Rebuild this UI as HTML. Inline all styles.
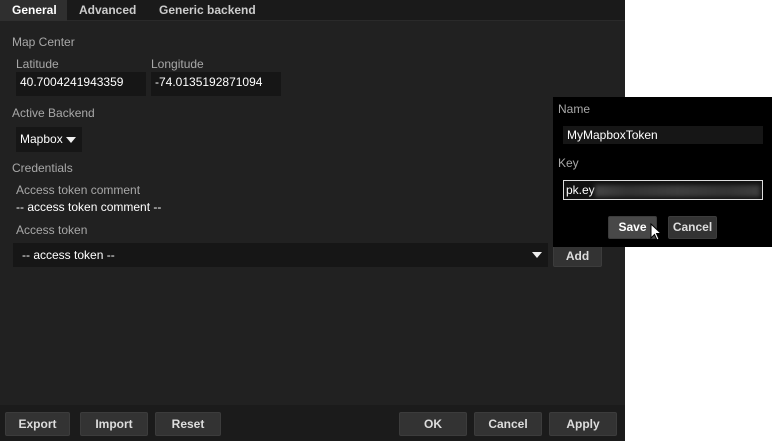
<!DOCTYPE html>
<html><head><style>
*{margin:0;padding:0;box-sizing:border-box}
body{width:772px;height:441px;background:#fff;position:relative;overflow:hidden;font-family:"Liberation Sans",sans-serif;font-size:12px}
.p{position:absolute;left:0;top:0;width:625px;height:441px;background:#212121}
.a{position:absolute;white-space:nowrap}
.l{color:#a8a8a8}
.w{color:#fff}
.in{position:absolute;background:#161616;color:#fff;padding-left:4px;line-height:20px}
.b{position:absolute;background:#333;border:1px solid #3c3c3c;border-radius:2px;color:#ddd;font-weight:bold;text-align:center;line-height:21px}
.tri{display:inline-block;width:0;height:0;border-left:5px solid transparent;border-right:5px solid transparent;border-top:6px solid #eee;vertical-align:middle}
</style></head><body>
<div class="p">
 <div class="a" style="left:0;top:0;width:625px;height:21px;background:#1a1a1a;border-bottom:1px solid #2a2a2a"></div>
 <div class="a" style="left:0;top:0;width:67px;height:21px;background:#2f2f2f"></div>
 <div class="a w" style="left:12px;top:3px;font-weight:bold">General</div>
 <div class="a" style="left:79px;top:3px;font-weight:bold;color:#ccc">Advanced</div>
 <div class="a" style="left:159px;top:3px;font-weight:bold;color:#ccc">Generic backend</div>

 <div class="a l" style="left:12px;top:35px">Map Center</div>
 <div class="a l" style="left:16px;top:57px">Latitude</div>
 <div class="a l" style="left:151px;top:57px">Longitude</div>
 <div class="in" style="left:16px;top:72px;width:130px;height:24px;line-height:20px">40.7004241943359</div>
 <div class="in" style="left:151px;top:72px;width:130px;height:24px;line-height:20px">-74.0135192871094</div>

 <div class="a l" style="left:12px;top:106px">Active Backend</div>
 <div class="in" style="left:16px;top:127px;width:66px;height:25px;line-height:25px">Mapbox <span class="tri"></span></div>

 <div class="a l" style="left:12px;top:161px">Credentials</div>
 <div class="a l" style="left:16px;top:183px">Access token comment</div>
 <div class="a w" style="left:16px;top:200px">-- access token comment --</div>
 <div class="a l" style="left:16px;top:223px">Access token</div>
 <div class="in" style="left:13px;top:243px;width:535px;height:24px;line-height:24px;padding-left:9px">-- access token --<span class="tri" style="position:absolute;right:6px;top:9px"></span></div>
 <div class="b" style="left:553px;top:245px;width:49px;height:22px">Add</div>

 <div class="a" style="left:0;top:405px;width:625px;height:36px;background:#1b1b1b"></div>
 <div class="b" style="left:5px;top:412px;width:65px;height:24px;line-height:22px">Export</div>
 <div class="b" style="left:80px;top:412px;width:68px;height:24px;line-height:22px">Import</div>
 <div class="b" style="left:155px;top:412px;width:66px;height:24px;line-height:22px">Reset</div>
 <div class="b" style="left:399px;top:412px;width:68px;height:24px;line-height:22px">OK</div>
 <div class="b" style="left:474px;top:412px;width:68px;height:24px;line-height:22px">Cancel</div>
 <div class="b" style="left:549px;top:412px;width:68px;height:24px;line-height:22px">Apply</div>
</div>

<div class="a" style="left:553px;top:97px;width:219px;height:150px;background:#000">
 <div class="a l" style="left:5px;top:5px">Name</div>
 <div class="in" style="left:10px;top:29px;width:200px;height:18px;line-height:18px">MyMapboxToken</div>
 <div class="a l" style="left:5px;top:59px">Key</div>
 <div class="a" style="left:10px;top:83px;width:200px;height:20px;border:1px solid #ddd;background:#111;color:#fff;padding-left:2px;line-height:18px;overflow:hidden">pk.ey<span style="display:inline-block;width:165px;height:12px;vertical-align:middle;background:linear-gradient(90deg,#444,#333 20%,#3e3e3e 50%,#333 80%,#3e3e3e);filter:blur(2px)"></span></div>
 <div class="b" style="left:55px;top:119px;width:49px;height:23px;background:#484848;color:#fff">Save</div>
 <div class="b" style="left:115px;top:119px;width:49px;height:23px;background:#333">Cancel</div>
 <svg class="a" style="left:97px;top:126px" width="12" height="19" viewBox="0 0 12 19"><path d="M1 1 L1 15 L4.5 11.5 L7 17 L9 16 L6.5 10.5 L11 10.5 Z" fill="#fff" stroke="#000" stroke-width="1"/></svg>
</div>
</body></html>
